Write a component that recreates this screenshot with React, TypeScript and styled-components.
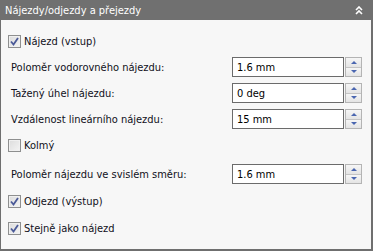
import styled, { createGlobalStyle } from "styled-components";

const GlobalStyle = createGlobalStyle`
  html, body {
    margin: 0;
    padding: 0;
    background: #ffffff;
  }
  body {
    font-family: "DejaVu Sans Condensed", "DejaVu Sans", "Liberation Sans", sans-serif;
    font-stretch: condensed;
  }
`;

const Panel = styled.div`
  width: 373px;
  height: 251px;
  box-sizing: border-box;
  display: flex;
  flex-direction: column;
  background: #f7f7f7;
  border: 1px solid #6f6f6f;
  border-top: none;
  border-right-width: 2px;
  border-bottom-width: 2px;
`;

const Header = styled.div`
  height: 20px;
  margin: 0 -2px 0 -1px;
  padding: 0 10px 0 5px;
  display: flex;
  align-items: center;
  justify-content: space-between;
  background: #707070;
  color: #ffffff;
  font-size: 11px;
`;

const Body = styled.div`
  display: flex;
  flex-direction: column;
  padding: 8px 9px 0 7px;
`;

const Row = styled.div<{ $gap?: number }>`
  height: 26px;
  margin-top: ${(p) => p.$gap ?? 0}px;
  display: flex;
  align-items: center;
  font-size: 11px;
  color: #101020;
`;

const Label = styled.span`
  flex: 1;
  padding-left: 3px;
`;

const CheckLabel = styled.label`
  display: flex;
  align-items: center;
  gap: 3px;
`;

const Box = styled.span`
  width: 11px;
  height: 11px;
  border: 1px solid #8e8f8f;
  background: linear-gradient(135deg, #dcdcdc 0%, #f4f4f4 100%);
  display: flex;
  align-items: center;
  justify-content: center;
  box-shadow: inset 0 0 0 1px #f0f0f0;
`;

const Input = styled.div`
  width: 106px;
  height: 18px;
  border: 1px solid #6b6b6b;
  background: #ffffff;
  display: flex;
  align-items: center;
  padding-left: 4px;
  font-size: 11px;
  color: #000;
`;

const Spinner = styled.div`
  width: 15px;
  height: 18px;
  margin-left: 1px;
  border: 1px solid #b4b4b4;
  display: flex;
  flex-direction: column;
`;

const SpinHalf = styled.div<{ $down?: boolean }>`
  flex: 1;
  display: flex;
  align-items: center;
  justify-content: center;
  background: linear-gradient(#f6f6f6, #e4e4e4);
  border-top: ${(p) => (p.$down ? "1px solid #c4c4c4" : "none")};
`;

const Tri = styled.span<{ $down?: boolean }>`
  width: 0;
  height: 0;
  border-left: 3px solid transparent;
  border-right: 3px solid transparent;
  ${(p) =>
    p.$down
      ? "border-top: 3px solid #4a66b0;"
      : "border-bottom: 3px solid #4a66b0;"}
`;

const Check = ({ checked }: { checked?: boolean }) => (
  <Box>
    {checked && (
      <svg width="9" height="9" viewBox="0 0 9 9">
        <path
          d="M1 4.5 L3.5 7.5 L8 1"
          fill="none"
          stroke="#4b5a98"
          strokeWidth="1.8"
        />
      </svg>
    )}
  </Box>
);

const CheckRow = ({
  text,
  checked,
  gap,
}: {
  text: string;
  checked?: boolean;
  gap?: number;
}) => (
  <Row $gap={gap}>
    <CheckLabel>
      <Check checked={checked} />
      {text}
    </CheckLabel>
  </Row>
);

const FieldRow = ({
  label,
  value,
  gap,
}: {
  label: string;
  value: string;
  gap?: number;
}) => (
  <Row $gap={gap}>
    <Label>{label}</Label>
    <Input>{value}</Input>
    <Spinner>
      <SpinHalf>
        <Tri />
      </SpinHalf>
      <SpinHalf $down>
        <Tri $down />
      </SpinHalf>
    </Spinner>
  </Row>
);

const Collapse = () => (
  <svg width="8" height="9" viewBox="0 0 8 9">
    <path d="M1 4 L4 1 L7 4 M1 8 L4 5 L7 8" fill="none" stroke="#fff" strokeWidth="1.6" />
  </svg>
);

export default function App() {
  return (
    <>
      <GlobalStyle />
      <Panel>
        <Header>
          <span>Nájezdy/odjezdy a přejezdy</span>
          <Collapse />
        </Header>
        <Body>
          <CheckRow text="Nájezd (vstup)" checked />
          <FieldRow label="Poloměr vodorovného nájezdu:" value="1.6 mm" />
          <FieldRow label="Tažený úhel nájezdu:" value="0 deg" />
          <FieldRow label="Vzdálenost lineárního nájezdu:" value="15 mm" />
          <CheckRow text="Kolmý" />
          <FieldRow label="Poloměr nájezdu ve svislém směru:" value="1.6 mm" gap={3} />
          <CheckRow text="Odjezd (výstup)" checked gap={1} />
          <CheckRow text="Stejně jako nájezd" checked gap={1} />
        </Body>
      </Panel>
    </>
  );
}
